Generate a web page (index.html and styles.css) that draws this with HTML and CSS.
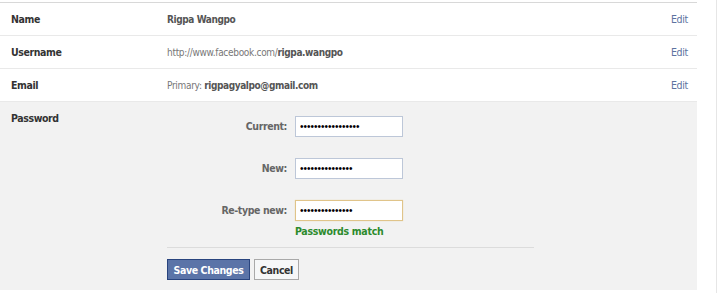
FILE: index.html
```html
<!DOCTYPE html>
<html lang="en">

<head>
    <meta charset="UTF-8">
    <title>Account Settings</title>
    <link rel="stylesheet" href="styles.css">
</head>

<body>
    <div class="page">
        <div class="settings">
            <div class="row">
                <div class="label">Name</div>
                <div class="value"><b>Rigpa Wangpo</b></div>
                <a class="edit" href="#">Edit</a>
            </div>
            <div class="row">
                <div class="label">Username</div>
                <div class="value">http://www.facebook.com/<b>rigpa.wangpo</b></div>
                <a class="edit" href="#">Edit</a>
            </div>
            <div class="row">
                <div class="label">Email</div>
                <div class="value">Primary: <b>rigpagyalpo@gmail.com</b></div>
                <a class="edit" href="#">Edit</a>
            </div>

            <!-- open password block -->
            <div class="row open">
                <div class="label">Password</div>
                <div class="pwform">
                    <div class="fields">
                        <label for="cur">Current:</label>
                        <input type="password" id="cur" value="xxxxxxxxxxxxxxxxx">
                        <label for="nw">New:</label>
                        <input type="password" id="nw" value="xxxxxxxxxxxxxxx">
                        <label for="re">Re-type new:</label>
                        <div>
                            <input type="password" id="re" class="focus" value="xxxxxxxxxxxxxxx">
                            <div class="match">Passwords match</div>
                        </div>
                    </div>
                    <div class="buttons">
                        <button class="btn save">Save Changes</button>
                        <button class="btn cancel">Cancel</button>
                    </div>
                </div>
            </div>
        </div>
    </div>
</body>

</html>
```

FILE: styles.css
```css
body {
    margin: 0;
    background-color: #fff;
    font-family: "DejaVu Sans Condensed", "DejaVu Sans", Tahoma, sans-serif;
    font-stretch: condensed;
    font-size: 10.5px;
    letter-spacing: -0.3px;
    color: #333;
}

b {
    letter-spacing: -0.4px;
}

.page {
    width: 716px;
    padding-top: 2px;
    padding-bottom: 3px;
    border-right: 1px solid #e6e6e6;
}

.settings {
    width: 697px;
    border-top: 1px solid #d8d8d8;
}

.row {
    display: flex;
    align-items: center;
    height: 32px;
    padding: 0 9px 0 11px;
    border-bottom: 1px solid #e9e9e9;
}

.row .label {
    width: 156px;
    font-weight: bold;
    letter-spacing: -0.4px;
    color: #333;
}

.row .value {
    flex: 1;
    font-size: 10px;
    color: #777;
}

.row .value b {
    color: #555;
}

.edit {
    color: #5d72a0;
    text-decoration: none;
}

/* password row is expanded */
.row.open {
    height: auto;
    align-items: flex-start;
    background-color: #f2f2f2;
    border-bottom: none;
    padding-top: 9px;
    padding-bottom: 10px;
}

.row.open .label {
    line-height: 15px;
}

.pwform {
    width: 367px;
    padding-top: 5px;
}

.fields {
    display: grid;
    grid-template-columns: 120px 108px;
    column-gap: 8px;
    row-gap: 21px;
    align-items: start;
}

.fields label {
    text-align: right;
    font-weight: bold;
    letter-spacing: -0.4px;
    color: #666;
    line-height: 21px;
}

.fields input {
    box-sizing: border-box;
    width: 108px;
    height: 21px;
    margin: 0;
    padding: 0 4px;
    border: 1px solid #bdc7d8;
    background: #fff;
    font-family: "Liberation Sans", Arial, sans-serif;
    font-size: 10px;
    letter-spacing: 0;
    color: #000;
}

.fields input.focus {
    border-color: #e0c48a;
    box-shadow: 0 0 1px #e8d4a8;
}

.match {
    margin-top: 2px;
    font-weight: bold;
    letter-spacing: -0.3px;
    color: #2c8a2c;
    line-height: 16px;
}

.buttons {
    margin-top: 8px;
    padding-top: 11px;
    border-top: 1px solid #dcdcdc;
    display: flex;
    gap: 4px;
}

.btn {
    height: 21px;
    padding: 0;
    white-space: nowrap;
    font-family: inherit;
    font-stretch: condensed;
    font-size: 10.5px;
    font-weight: bold;
    letter-spacing: -0.4px;
    cursor: pointer;
}

.btn.save {
    width: 83px;
    color: #fff;
    background-color: #5b74a8;
    border: 1px solid #29447e;
}

.btn.cancel {
    width: 45px;
    color: #333;
    background-color: #f6f7f8;
    border: 1px solid #a9a9a9;
}
```
